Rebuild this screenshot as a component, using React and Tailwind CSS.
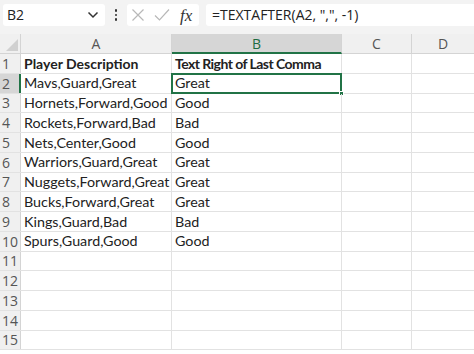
import React from "react";

const rows = [
  ["Player Description", "Text Right of Last Comma"],
  ["Mavs,Guard,Great", "Great"],
  ["Hornets,Forward,Good", "Good"],
  ["Rockets,Forward,Bad", "Bad"],
  ["Nets,Center,Good", "Good"],
  ["Warriors,Guard,Great", "Great"],
  ["Nuggets,Forward,Great", "Great"],
  ["Bucks,Forward,Great", "Great"],
  ["Kings,Guard,Bad", "Bad"],
  ["Spurs,Guard,Good", "Good"],
  ["", ""],
  ["", ""],
  ["", ""],
  ["", ""],
  ["", ""],
];

export default function App() {
  return (
    <div className="w-[474px] h-[354px] overflow-hidden bg-white text-[#222]" style={{ fontFamily: '"Open Sans", "Noto Sans", sans-serif' }}>
      {/* formula bar */}
      <div className="h-[30px] bg-[#f3f3f3] flex items-center pl-[3px] gap-0">
        <div className="w-[102px] h-[22px] bg-white rounded-[3px] flex items-center justify-between pl-[4px] pr-[6px]">
          <span className="text-[14px] leading-none text-[#222]">B2</span>
          <svg width="12" height="8" viewBox="0 0 12 8"><path d="M1.5 1.5 L6 6 L10.5 1.5" fill="none" stroke="#333" strokeWidth="1.5" /></svg>
        </div>
        <div className="w-[22px] flex flex-col items-center gap-[2px]">
          <div className="w-[2.5px] h-[2.5px] bg-[#333] rounded-full" />
          <div className="w-[2.5px] h-[2.5px] bg-[#333] rounded-full" />
          <div className="w-[2.5px] h-[2.5px] bg-[#333] rounded-full" />
        </div>
        <div className="w-[72px] h-[22px] bg-white rounded-[3px] flex items-center pl-[4px]">
          <svg width="14" height="14" viewBox="0 0 14 14"><path d="M1.5 1.5 L12.5 12.5 M12.5 1.5 L1.5 12.5" stroke="#b8b8b8" strokeWidth="1.2" fill="none" /></svg>
          <svg className="ml-[9px]" width="16" height="14" viewBox="0 0 16 14"><path d="M1 7.5 L5.5 12 L15 1.5" stroke="#b8b8b8" strokeWidth="1.2" fill="none" /></svg>
          <span className="ml-[10px] text-[17px] leading-none italic text-[#333]" style={{ fontFamily: '"Liberation Serif", serif' }}>fx</span>
        </div>
        <div className="ml-[7px] flex-1 h-[22px] bg-white rounded-l-[3px] flex items-center pl-[6px]">
          <span className="text-[14px] leading-none text-[#222]">=TEXTAFTER(A2, ",", -1)</span>
        </div>
      </div>
      <div className="h-[4px] bg-[#f3f3f3]" />
      {/* column headers */}
      <div className="flex h-[20px] bg-[#f0f0f0] border-b border-[#d4d4d4]">
        <div className="w-[21px] border-r border-[#d4d4d4] relative overflow-hidden">
          <svg className="absolute right-[2px] bottom-[2px]" width="12" height="12" viewBox="0 0 12 12"><path d="M12 0 L12 12 L0 12 Z" fill="#d0d0d0" /></svg>
        </div>
        <div className="w-[151px] border-r border-[#d4d4d4] flex items-center justify-center text-[14px] text-[#555]">A</div>
        <div className="w-[170px] border-r border-[#d4d4d4] flex items-center justify-center text-[14px] text-[#1e6b41] bg-[#d6d6d6] border-b-2 border-b-[#217346] -mb-px">B</div>
        <div className="w-[70px] border-r border-[#d4d4d4] flex items-center justify-center text-[14px] text-[#555]">C</div>
        <div className="flex-1 flex items-center justify-center text-[14px] text-[#555]">D</div>
      </div>
      {rows.map((r, i) => {
        const sel = i === 1;
        const head = i === 0;
        return (
          <div key={i} className="flex h-[19.75px] border-b border-[#e2e2e2]">
            <div className={`w-[21px] shrink-0 flex items-center pl-[2px] text-[14px] text-[#555] border-r ${sel ? "bg-[#d6d6d6] border-r-2 border-r-[#217346] text-[#1e6b41]" : "bg-[#f0f0f0] border-[#d4d4d4]"}`}>{i + 1}</div>
            <div className={`w-[151px] shrink-0 border-r border-[#e2e2e2] flex items-center pl-[3px] whitespace-nowrap overflow-visible ${head ? "font-bold text-[14px]" : "text-[14.3px]"}`} style={{ fontFamily: 'Lato, sans-serif' }}>{r[0]}</div>
            <div className={`w-[170px] shrink-0 border-r border-[#e2e2e2] flex items-center pl-[3px] whitespace-nowrap relative ${head ? "font-bold text-[14px] tracking-[-0.55px]" : "text-[14.3px]"}`} style={{ fontFamily: 'Lato, sans-serif' }}>
              {sel && <div className="absolute -left-px -top-px -right-px -bottom-px border-2 border-[#217346]" />}
              {sel && <div className="absolute -right-[3px] -bottom-[3px] w-[5px] h-[5px] bg-[#217346] border border-white" />}
              <span className="relative">{r[1]}</span>
            </div>
            <div className="w-[70px] shrink-0 border-r border-[#e2e2e2]" />
            <div className="flex-1" />
          </div>
        );
      })}
    </div>
  );
}
